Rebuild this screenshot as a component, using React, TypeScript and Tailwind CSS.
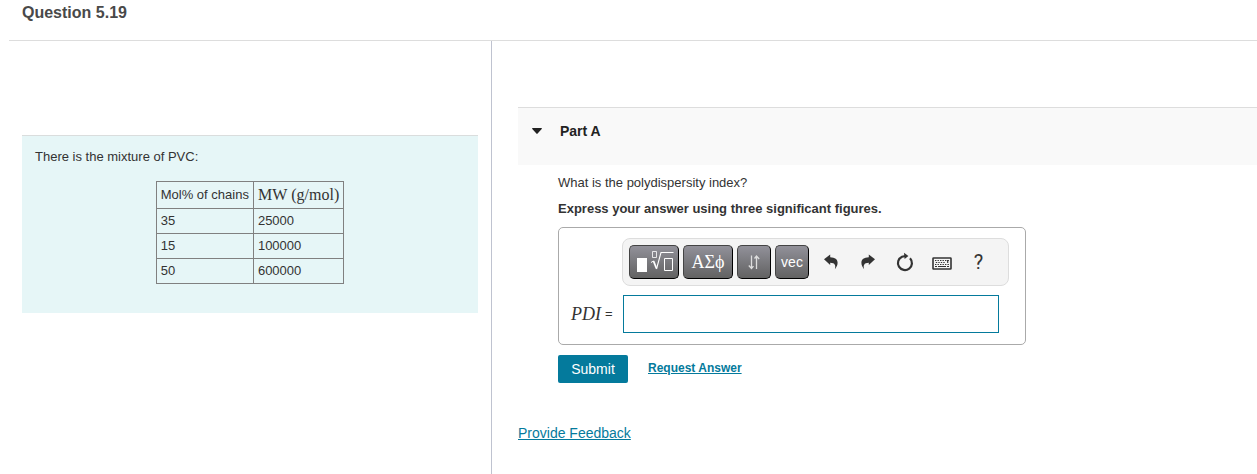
import type { ReactNode } from "react";

const rows = [
  { mol: "35", mw: "25000" },
  { mol: "15", mw: "100000" },
  { mol: "50", mw: "600000" },
];

function PaletteButton({ label, wide, children }: { label: string; wide?: boolean; children: ReactNode }) {
  return (
    <button
      type="button"
      aria-label={label}
      className={`${wide ? "w-[50px]" : "w-[34px]"} flex h-[34px] shrink-0 items-center justify-center rounded-[5px] border border-t-[#444] border-r-black border-b-black border-l-[#444] bg-linear-to-b from-[#92919a] to-[#626262] text-white`}
    >
      {children}
    </button>
  );
}

function ToolButton({ label, children }: { label: string; children: ReactNode }) {
  return (
    <button type="button" aria-label={label} className="flex h-[34px] w-[37px] shrink-0 items-center justify-center text-[#333]">
      {children}
    </button>
  );
}

const CurvedArrow = ({ flip }: { flip?: boolean }) => (
  <svg width="14" height="16" viewBox="0 0 14 16" fill="currentColor" className={flip ? "-scale-x-100" : ""}>
    <path d="M0 5.3 6.2.4v2.8c4.8.1 7.4 2.2 7.4 5.6 0 2.2-1 4.4-2.7 6.4 1-3.6.3-6.3-4.7-6.4v2.3z" />
  </svg>
);

export default function App() {
  return (
    <div className="flex min-h-screen flex-col bg-white pl-[9px] font-['Liberation_Sans',Arial,sans-serif] text-[13px] leading-5 text-[#333]">
      <header className="border-b border-[#ddd] px-[13px] pt-[3px] pb-[17px]">
        <h1 className="text-base leading-5 font-bold text-[#494949]">Question 5.19</h1>
      </header>

      <div className="flex flex-1">
        <section className="w-[483px] shrink-0 border-r border-[#bfc3d0] px-[13px] pt-[94px]">
          <div className="border-t border-[#dadddd] bg-[#e6f6f7] px-[13px] pt-[11px] pb-[29px]">
            <p>There is the mixture of PVC:</p>
            <table className="mx-auto mt-[14px] border-collapse">
              <thead>
                <tr className="h-[27px]">
                  <th className="border border-[#808080] px-1 text-left font-normal">Mol% of chains</th>
                  <th className="border border-[#808080] px-1 text-left font-['Liberation_Serif',serif] text-base leading-5 font-normal">
                    <span className="flex items-center gap-1"><span>MW</span><span>(g/mol)</span></span>
                  </th>
                </tr>
              </thead>
              <tbody>
                {rows.map((row) => (
                  <tr key={row.mol} className="h-[25px]">
                    <td className="border border-[#808080] px-1">{row.mol}</td>
                    <td className="border border-[#808080] px-1">{row.mw}</td>
                  </tr>
                ))}
              </tbody>
            </table>
          </div>
        </section>

        <main className="min-w-0 flex-1 pt-[66px] pl-[26px]">
          <div className="h-[58px] border-t border-[#ddd] bg-[#f9f9f9] px-[14px] pt-[13px]">
            <button type="button" aria-expanded="true" className="flex items-center text-sm leading-5 font-bold text-[#222]">
              <svg width="10" height="6" viewBox="0 0 10 6" className="mr-[18px]" fill="currentColor">
                <path d="M.8 0h8.4c.8 0 1 .6.5 1.1L5.6 5.6c-.4.4-.8.4-1.2 0L.3 1.1C-.2.6 0 0 .8 0z" />
              </svg>
              Part A
            </button>
          </div>

          <div className="px-10 pt-2">
            <p>What is the polydispersity index?</p>
            <p className="mt-[6px] font-bold">Express your answer using three significant figures.</p>

            <form>
              <div className="mt-[8px] w-full max-w-[468px] rounded-[5px] border border-[#aaa] pt-[10px] pr-4 pb-[11px] pl-3">
                <div className="ml-[51px] flex h-12 items-center rounded-lg border border-[#ddd] bg-[#f4f4f4] pl-[6px]">
                  <div className="mr-[3px] flex gap-1">
                    <PaletteButton label="Templates" wide>
                      <svg width="40" height="24" viewBox="0 0 40 24" fill="none" stroke="white">
                        <path d="M3 8h10v14H3z" fill="white" stroke="none" />
                        <path d="M18.5 1.5h4v6h-4z" strokeWidth="1" opacity=".8" />
                        <path d="M17 12.5l2.5-1.5" strokeWidth="1" />
                        <path d="M19.5 11l3 7.5" strokeWidth="1.8" />
                        <path d="M22.5 19l4.5-16.5H39.5" strokeWidth="1.1" />
                        <path d="M30.5 8.5h8v12h-8z" strokeWidth="1" />
                      </svg>
                    </PaletteButton>
                    <PaletteButton label="Symbols" wide>
                      <span className="font-['Liberation_Serif',serif] text-lg leading-5">ΑΣϕ</span>
                    </PaletteButton>
                    <PaletteButton label="Relations">
                      <svg width="14" height="18" viewBox="0 0 14 18" fill="none" stroke="#ddd" strokeWidth="1.3">
                        <path d="M4.5 2.5v13M1.8 12.5l2.7 3 2-2.4M9.5 16V3M7.5 5.5l2-2.5 2.7 3" />
                      </svg>
                    </PaletteButton>
                    <PaletteButton label="Vectors"><span className="text-sm leading-5">vec</span></PaletteButton>
                  </div>
                  <ToolButton label="Undo"><CurvedArrow /></ToolButton>
                  <ToolButton label="Redo"><CurvedArrow flip /></ToolButton>
                  <ToolButton label="Reset">
                    <svg width="18" height="20" viewBox="0 0 18 20">
                      <path d="M14 6.2A7 7 0 1 1 6 4.7L9.5 4" fill="none" stroke="currentColor" strokeWidth="2.2" />
                      <path d="M8 .8 12.4 4 8.6 7z" fill="currentColor" />
                    </svg>
                  </ToolButton>
                  <ToolButton label="Keyboard shortcuts">
                    <svg width="20" height="20" viewBox="0 0 20 20" fill="none" stroke="currentColor">
                      <rect x="1" y="6" width="18" height="11" rx=".6" strokeWidth="1.6" />
                      <path d="M3 8.5h14M3.8 10.5h10M3 12.5h14" strokeWidth="1" strokeDasharray="1.4 1.1" />
                      <path d="M15.7 8v3" strokeWidth="1.2" />
                      <path d="M3 14.5h2M6 14.5h8M15 14.5h2" strokeWidth="1.1" />
                    </svg>
                  </ToolButton>
                  <ToolButton label="Help"><span className="font-['Roboto',sans-serif] text-xl leading-5">?</span></ToolButton>
                </div>

                <div className="mt-[9px] mr-[10px] flex items-center">
                  <label htmlFor="pdi" className="flex w-[52px] shrink-0 items-center gap-1">
                    <span className="font-['Liberation_Serif',serif] text-lg leading-5 italic">PDI</span>
                    <span>=</span>
                  </label>
                  <input id="pdi" type="text" className="h-[38px] min-w-0 flex-1 border border-[#047a9c] bg-white px-2 text-base outline-none" />
                </div>
              </div>

              <div className="mt-[10px] flex items-center gap-5">
                <button type="button" className="h-7 w-[70px] rounded-[2px] bg-[#047a9c] text-sm leading-5 text-white">Submit</button>
                <a href="#answer" className="pb-[3px] text-xs leading-5 font-bold text-[#047a9c] underline">Request Answer</a>
              </div>
            </form>
          </div>

          <a href="#feedback" className="mt-10 inline-block text-sm leading-5 text-[#047a9c] underline">Provide Feedback</a>
        </main>
      </div>
    </div>
  );
}
